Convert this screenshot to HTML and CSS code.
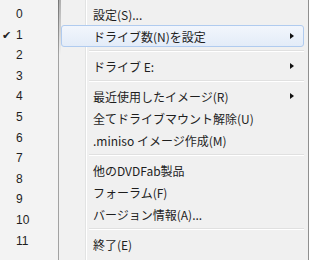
FILE: index.html
```html
<!DOCTYPE html>
<html lang="ja">
<head>
    <meta charset="UTF-8">
    <title>Virtual Drive Menu</title>
    <link rel="stylesheet" href="styles.css">
</head>
<body>
    <div class="screen">
        <!-- Drive count submenu -->
        <ul class="count-list">
            <li>0</li>
            <li class="checked">1</li>
            <li>2</li>
            <li>3</li>
            <li>4</li>
            <li>5</li>
            <li>6</li>
            <li>7</li>
            <li>8</li>
            <li>9</li>
            <li>10</li>
            <li>11</li>
        </ul>

        <!-- Main context menu -->
        <ul class="menu">
            <li class="item">設定(S)...</li>
            <li class="item active sub">ドライブ数(N)を設定</li>
            <li class="sep"></li>
            <li class="item sub">ドライブ E:</li>
            <li class="sep"></li>
            <li class="item sub">最近使用したイメージ(R)</li>
            <li class="item">全てドライブマウント解除(U)</li>
            <li class="item">.miniso イメージ作成(M)</li>
            <li class="sep"></li>
            <li class="item">他のDVDFab製品</li>
            <li class="item">フォーラム(F)</li>
            <li class="item">バージョン情報(A)...</li>
            <li class="sep"></li>
            <li class="item">終了(E)</li>
        </ul>
    </div>
</body>
</html>
```

FILE: styles.css
```css
/* --- Base --- */
body {
    margin: 0;
    background: #f0f0f0;
    font-family: "Noto Sans CJK JP", "Noto Sans", sans-serif;
    font-size: 12px;
    color: #1e1e1e;
    overflow: hidden;
}

ul {
    list-style: none;
    margin: 0;
    padding: 0;
}

.screen {
    display: flex;
    width: 309px;
    height: 260px;
}

/* --- Left list (drive count) --- */
.count-list {
    position: relative;
    width: 58px;
    padding-top: 4px;
    background: #f3f3f3;
    border-right: 1px solid #a2a2a2;
    font-family: "Liberation Sans", Arial, sans-serif;
}

/* shadow near the top of the edge */
.count-list::after {
    content: "";
    position: absolute;
    top: 0;
    right: -3px;
    width: 3px;
    height: 55px;
    background: linear-gradient(rgba(0, 0, 0, 0.28), rgba(0, 0, 0, 0));
}

.count-list li {
    position: relative;
    height: 20.6px;
    line-height: 20.6px;
    padding-left: 16px;
}

.count-list li.checked::before {
    content: "\2714";
    position: absolute;
    left: 2px;
    top: 0;
    font-size: 11px;
    color: #222;
}

/* --- Main menu --- */
.menu {
    flex: 1;
    padding: 3px 4px 0 2px;
    border-right: 1px solid #8f8f8f;
    background: linear-gradient(to right, #f1f1f1 26px, #e2e3e3 26px, #e2e3e3 27px, #fff 27px, #fff 28px, #f0f0f0 28px);
}

.item {
    position: relative;
    height: 22px;
    line-height: 21px;
    padding-left: 31px;
    border: 1px solid transparent;
    border-radius: 3px;
    box-sizing: border-box;
}

.item.active {
    background: linear-gradient(#f2f6fc, #e3ecf8);
    border-color: #b0cbef;
}

.item.sub::after {
    content: "";
    position: absolute;
    right: 9px;
    top: 7px;
    border-left: 4px solid #111;
    border-top: 3.5px solid transparent;
    border-bottom: 3.5px solid transparent;
}

.sep {
    height: 8px;
    margin-left: 28px;
    background: linear-gradient(transparent 3px, #e0e0e0 3px, #e0e0e0 4px, #fff 4px, #fff 5px, transparent 5px);
}
```
